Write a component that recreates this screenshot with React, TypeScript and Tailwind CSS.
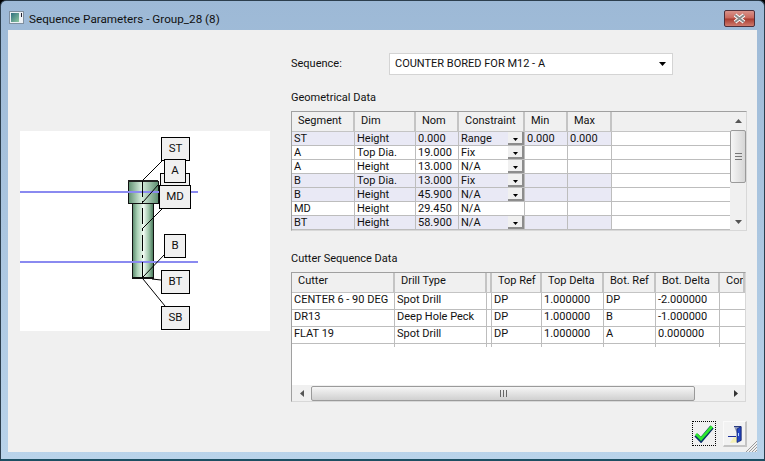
import React from "react";

const font = { fontFamily: 'Roboto, "Liberation Sans", sans-serif' };

const geoCols = [63, 61, 43, 66, 43, 44, 118];
const geoHead = ["Segment", "Dim", "Nom", "Constraint", "Min", "Max", ""];
const geoRows: { c: string[]; tint: boolean; btn: boolean }[] = [
  { c: ["ST", "Height", "0.000", "Range", "0.000", "0.000", ""], tint: true, btn: true },
  { c: ["A", "Top Dia.", "19.000", "Fix", "", "", ""], tint: false, btn: true },
  { c: ["A", "Height", "13.000", "N/A", "", "", ""], tint: false, btn: true },
  { c: ["B", "Top Dia.", "13.000", "Fix", "", "", ""], tint: true, btn: true },
  { c: ["B", "Height", "45.900", "N/A", "", "", ""], tint: true, btn: true },
  { c: ["MD", "Height", "29.450", "N/A", "", "", ""], tint: false, btn: false },
  { c: ["BT", "Height", "58.900", "N/A", "", "", ""], tint: true, btn: true },
];
const cutCols = [103, 92, 5, 50, 62, 52, 64, 25];
const cutHead = ["Cutter", "Drill Type", "", "Top Ref", "Top Delta", "Bot. Ref", "Bot. Delta", "Con"];
const cutRows = [
  ["CENTER 6 - 90 DEG", "Spot Drill", "", "DP", "1.000000", "DP", "-2.000000", ""],
  ["DR13", "Deep Hole Peck", "", "DP", "1.000000", "B", "-1.000000", ""],
  ["FLAT 19", "Spot Drill", "", "DP", "1.000000", "A", "0.000000", ""],
];

function HeaderCell({ w, text, lift }: { w: number; text: string; lift?: boolean }) {
  return (
    <div
      className={`flex h-full shrink-0 items-center overflow-hidden whitespace-nowrap border-r-2 border-[#c4c4c4] bg-[#f0f0f0] text-[11px] text-[#111] ${text ? "pl-[6px]" : "pl-0"} ${lift ? "pb-[2px]" : ""}`}
      style={{ width: w }}
    >
      {text}
    </div>
  );
}

function MiniArrow() {
  return (
    <svg width="7" height="4" viewBox="0 0 7 4">
      <path d="M0 0h7L3.5 4z" fill="#000" />
    </svg>
  );
}

function DropBtn() {
  return (
    <div className="absolute right-0 top-0 flex h-[13px] w-[16px] items-center justify-center border-b-2 border-r-2 border-[#8d8d8d] bg-[#f0f0f0] pt-[3px]">
      <svg width="5" height="3" viewBox="0 0 5 3">
        <path d="M0 0h5L2.5 3z" fill="#000" />
      </svg>
    </div>
  );
}

function GeoTable() {
  return (
    <div className="mt-[6px] flex h-[120px] w-[456px] border border-[#a0a0a0] border-r-[#d8d8d8] border-b-[#d8d8d8] bg-white">
      <div className="w-[438px] shrink-0">
        <div className="flex h-[20px] border-b border-[#c4c4c4]">
          {geoHead.map((h, i) =>
            i === 6 ? (
              <div key={i} className="h-full grow bg-[#f0f0f0]" />
            ) : (
              <HeaderCell key={i} w={geoCols[i]} text={h} />
            ),
          )}
        </div>
        {geoRows.map((r, ri) => (
          <div key={ri} className="flex h-[14px] border-b border-[#bdbdbd]">
            {r.c.map((t, i) => (
              <div
                key={i}
                className={`relative h-full shrink-0 overflow-hidden whitespace-nowrap pl-[2px] text-[11px] leading-[13px] text-[#111] ${i < 6 ? "border-r border-[#bdbdbd]" : ""} ${r.tint && i < 6 ? "bg-[#e9e9f5]" : "bg-white"}`}
                style={{ width: geoCols[i] }}
              >
                {t}
                {i === 3 && r.btn && <DropBtn />}
              </div>
            ))}
          </div>
        ))}
      </div>
      <div className="flex w-[16px] shrink-0 flex-col bg-[#f0f0f0]">
        <div className="flex h-[18px] items-center justify-center">
          <svg width="7" height="4" viewBox="0 0 7 4">
            <path d="M0 4h7L3.5 0z" fill="#555" />
          </svg>
        </div>
        <div className="flex h-[53px] items-center justify-center rounded-[2px] border border-[#9a9a9a] bg-gradient-to-r from-[#f6f6f6] to-[#d6d6d6]">
          <svg width="7" height="7" viewBox="0 0 7 7">
            <path d="M0 .5h7M0 3.5h7M0 6.5h7" stroke="#777" />
          </svg>
        </div>
        <div className="grow" />
        <div className="flex h-[16px] items-center justify-center">
          <svg width="7" height="4" viewBox="0 0 7 4">
            <path d="M0 0h7L3.5 4z" fill="#555" />
          </svg>
        </div>
      </div>
    </div>
  );
}

function CutterTable() {
  return (
    <div className="mt-[6px] flex h-[130px] w-[455px] flex-col border border-[#a0a0a0] border-r-[#d8d8d8] border-b-[#d8d8d8] bg-white">
      <div className="flex h-[20px] shrink-0 border-b border-[#c4c4c4] bg-[#f0f0f0]">
        {cutHead.map((h, i) => (
          <HeaderCell key={i} w={cutCols[i]} text={h} lift />
        ))}
      </div>
      <div className="h-[92px] shrink-0">
        {cutRows.map((r, ri) => (
          <div key={ri} className="flex h-[17px] border-b border-[#bdbdbd]">
            {r.map((t, i) => (
              <div
                key={i}
                className={`h-full shrink-0 overflow-hidden whitespace-nowrap pl-[2px] text-[11px] leading-[14px] text-[#111] ${i < 7 ? "border-r border-[#bdbdbd]" : ""}`}
                style={{ width: cutCols[i] }}
              >
                {t}
              </div>
            ))}
          </div>
        ))}
        <div className="flex h-[3px]">
          {cutCols.map((w, i) => (
            <div key={i} className={`h-full shrink-0 ${i < 7 ? "border-r border-[#bdbdbd]" : ""}`} style={{ width: w }} />
          ))}
        </div>
      </div>
      <div className="flex h-[16px] shrink-0 items-center bg-[#f0f0f0]">
        <div className="flex w-[19px] justify-center">
          <svg width="4" height="7" viewBox="0 0 4 7">
            <path d="M4 0v7L0 3.5z" fill="#555" />
          </svg>
        </div>
        <div className="flex h-[15px] w-[384px] items-center justify-center rounded-[2px] border border-[#9a9a9a] bg-gradient-to-b from-[#f6f6f6] to-[#d0d0d0]">
          <svg width="7" height="7" viewBox="0 0 7 7">
            <path d="M.5 0v7M3.5 0v7M6.5 0v7" stroke="#666" />
          </svg>
        </div>
        <div className="ml-auto flex w-[19px] justify-center">
          <svg width="4" height="7" viewBox="0 0 4 7">
            <path d="M0 0v7l4-3.5z" fill="#333" />
          </svg>
        </div>
      </div>
    </div>
  );
}

function Box({ x, y, w, t }: { x: number; y: number; w: number; t: string }) {
  return (
    <div
      className="absolute flex h-[24px] items-center justify-center border border-black bg-[#f0f0f0] text-[11.5px] text-[#111]"
      style={{ left: x, top: y, width: w }}
    >
      {t}
    </div>
  );
}

function Drawing() {
  return (
    <div className="relative h-[200px] w-[250px] bg-white">
      <svg className="absolute left-0 top-0" width="250" height="200" viewBox="0 0 250 200" shapeRendering="crispEdges">
        <defs>
          <linearGradient id="shank" x1="0" x2="1" y1="0" y2="0">
            <stop offset="0" stopColor="#4f7f62" />
            <stop offset=".25" stopColor="#a8d0b4" />
            <stop offset=".55" stopColor="#f0faf2" />
            <stop offset=".8" stopColor="#9cc4a8" />
            <stop offset="1" stopColor="#4a7a5c" />
          </linearGradient>
          <linearGradient id="head" x1="0" x2="1" y1="0" y2="0">
            <stop offset="0" stopColor="#5b8c6d" />
            <stop offset=".45" stopColor="#d8eede" />
            <stop offset="1" stopColor="#5f9072" />
          </linearGradient>
        </defs>
        <rect x="112" y="72" width="21" height="75" fill="url(#shank)" stroke="#111" />
        <rect x="108" y="50" width="30" height="22" fill="url(#head)" stroke="#111" />
        <rect x="108" y="49" width="30" height="2" fill="#222" />
        <rect x="112" y="146" width="21" height="2" fill="#111" />
        <rect x="0" y="60" width="178" height="2" fill="#8a8af0" />
        <rect x="0" y="130" width="178" height="2" fill="#8a8af0" />
        <path d="M122 50h1v16h-1zM122 70h1v3h-1zM122 77h1v16h-1zM122 97h1v3h-1zM122 104h1v16h-1zM122 124h1v3h-1zM122 131h1v16h-1z" fill="#000" />
      </svg>
      <svg className="absolute left-0 top-0" width="250" height="200" viewBox="0 0 250 200">
        <path d="M123 49L143 29M123 71L138 54M122 98L143 77M123 146L144 124M132 148L141 149M123 148L145 175" stroke="#000" fill="none" />
      </svg>
      <Box x={141} y={6} w={29} t="ST" />
      <Box x={140} y={42} w={30} t="" />
      <Box x={144} y={28} w={22} t="A" />
      <Box x={139} y={54} w={32} t="MD" />
      <Box x={144} y={103} w={22} t="B" />
      <Box x={141} y={139} w={29} t="BT" />
      <Box x={141} y={175} w={29} t="SB" />
    </div>
  );
}

export default function App() {
  return (
    <div style={font} className="h-[461px] w-[765px] overflow-hidden bg-black">
      <div className="relative flex h-[461px] w-[765px] flex-col rounded-t-[6px] border border-b-2 border-[#2c3e4d] border-b-[#1d4f63] bg-gradient-to-b from-[#9db9d6] to-[#b9d3ea] px-[7px]">
        <div className="flex h-[29px] shrink-0 items-start">
          <svg width="15" height="13" viewBox="0 0 15 13" className="ml-[1px] mt-[10px] shrink-0">
            <defs>
              <linearGradient id="ico" x1="0" x2="1" y1="0" y2="1">
                <stop offset="0" stopColor="#2f6f7f" />
                <stop offset="1" stopColor="#8fc9a0" />
              </linearGradient>
            </defs>
            <rect x=".5" y=".5" width="14" height="12" fill="#eef2f6" stroke="#7f8f9f" />
            <rect x="2" y="2" width="8" height="9" fill="url(#ico)" />
            <rect x="12" y="2" width="1" height="4" fill="#223" />
          </svg>
          <span className="ml-[5px] mt-[10px] text-[11.7px] leading-[16px] text-[#111]">Sequence Parameters - Group_28 (8)</span>
          <div className="ml-auto mr-[2px] mt-[9px] flex h-[17px] w-[31px] items-center justify-center rounded-[2px] border border-[#4d2f3a] bg-[linear-gradient(#d9928a_0%,#c9675c_48%,#a73a2e_52%,#cf7a6c_100%)]">
            <svg width="15" height="11" viewBox="0 0 15 11">
              <path d="M3 2L12 9M12 2L3 9" stroke="#fff" strokeWidth="4" />
              <path d="M3 2L12 9M12 2L3 9" stroke="#8a8a8a" strokeWidth="2" />
            </svg>
          </div>
        </div>
        <div className="relative flex h-[422px] w-[749px] bg-[#f0f0f0]">
          <div className="w-[283px] shrink-0 pl-[12px] pt-[101px]">
            <Drawing />
          </div>
          <div className="flex w-[466px] flex-col">
            <div className="mt-[23px] flex h-[22px] items-center">
              <span className="w-[98px] text-[11px] text-[#111]">Sequence:</span>
              <div className="flex h-[22px] w-[284px] items-center justify-between border border-[#d4d4d4] bg-white pl-[5px] pr-[6px] text-[11px] text-[#111]">
                <span>COUNTER BORED FOR M12 - A</span>
                <MiniArrow />
              </div>
            </div>
            <div className="mt-[15px] h-[15px] text-[11px] leading-[15px] text-[#111]">Geometrical Data</div>
            <GeoTable />
            <div className="mt-[20px] h-[15px] text-[11px] leading-[15px] text-[#111]">Cutter Sequence Data</div>
            <CutterTable />
            <div className="mt-[19px] flex justify-end gap-[7px] pr-[10px]">
              <div className="flex h-[25px] w-[24px] items-center justify-center border border-dotted border-black bg-[#f0f0f0]">
                <svg width="20" height="18" viewBox="0 0 20 18">
                  <path d="M2 10L7 15L18 2" fill="none" stroke="#0b2f6b" strokeWidth="4.5" />
                  <path d="M2 9L7 14L18 1.5" fill="none" stroke="#2ee82e" strokeWidth="2.8" />
                </svg>
              </div>
              <div className="flex h-[26px] w-[24px] items-center justify-center border-b-2 border-r-2 border-l border-t border-b-[#c4c4c4] border-r-[#c4c4c4] border-l-[#fafafa] border-t-[#fafafa] bg-[#f2f2f2]">
                <svg width="20" height="20" viewBox="0 0 20 20">
                  <path d="M5 19l4-6h6v5z" fill="#f4f0b4" />
                  <path d="M9 2.5h7v14h-1" fill="#8e99b8" stroke="#2a3a80" />
                  <path d="M3 12.5h8" stroke="#1b2f9c" />
                  <path d="M12 5l4-2.5v14L12 18.5z" fill="#2346c4" stroke="#10206f" strokeWidth=".7" />
                  <rect x="13" y="9" width="1" height="3" fill="#b8dcff" />
                </svg>
              </div>
            </div>
          </div>
          <svg className="absolute bottom-0 right-0" width="12" height="12" viewBox="0 0 12 12">
            <path d="M12 1L1 12M12 4L4 12M12 7L7 12M12 10L10 12" stroke="#9a9a9a" />
          </svg>
        </div>
      </div>
    </div>
  );
}
